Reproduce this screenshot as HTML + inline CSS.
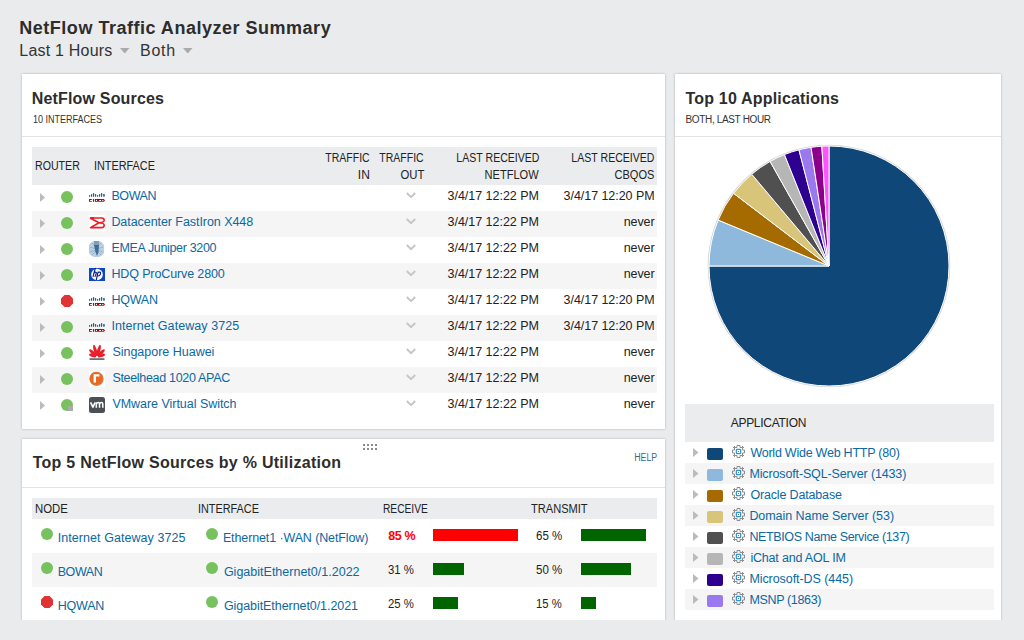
<!DOCTYPE html>
<html><head><meta charset="utf-8"><title>NetFlow Traffic Analyzer Summary</title>
<style>
html,body{margin:0;padding:0;}
body{width:1024px;height:640px;overflow:hidden;position:relative;background:#eaebed;font-family:"Liberation Sans",sans-serif;}
.t{position:absolute;white-space:pre;font-family:"Liberation Sans",sans-serif;}
.r{position:absolute;display:block;}
.panel{position:absolute;background:#fff;box-shadow:0 0 1px rgba(0,0,0,.25),0 0 3px rgba(0,0,0,.12);}
</style></head><body>
<div class="t" style="top:19.26px;font-size:18px;line-height:18px;font-weight:bold;color:#2d2d2d;letter-spacing:0.514px;left:19.30px;">NetFlow Traffic Analyzer Summary</div>
<div class="t" style="top:42.56px;font-size:16px;line-height:16px;font-weight:normal;color:#333;letter-spacing:0.208px;left:19.30px;">Last 1 Hours</div>
<div class="t" style="top:42.56px;font-size:16px;line-height:16px;font-weight:normal;color:#333;letter-spacing:0.728px;left:140.00px;">Both</div>
<svg class="r" style="left:120px;top:47.5px" width="9.5" height="5.5"><polygon points="0,0 9.5,0 4.75,5.5" fill="#aaaaaa"/></svg>
<svg class="r" style="left:183px;top:47.5px" width="9.5" height="5.5"><polygon points="0,0 9.5,0 4.75,5.5" fill="#aaaaaa"/></svg>
<div class="panel" style="left:22px;top:74px;width:643px;height:355px;"></div>
<div class="panel" style="left:22px;top:439px;width:643px;height:181px;clip-path:inset(-6px -6px 0 -6px);"></div>
<div class="panel" style="left:675px;top:74px;width:326px;height:546px;clip-path:inset(-6px -6px 0 -6px);"></div>
<div class="t" style="top:90.66px;font-size:16px;line-height:16px;font-weight:bold;color:#2d2d2d;letter-spacing:0.178px;left:31.70px;">NetFlow Sources</div>
<div class="t" style="top:114.83px;font-size:10px;line-height:10px;font-weight:normal;color:#333;letter-spacing:0.000px;transform:scaleX(0.9011);transform-origin:left center;left:32.70px;">10 INTERFACES</div>
<div class="r" style="left:22px;top:136px;width:643px;height:1px;background:#e3e3e3;"></div>
<div class="r" style="left:32px;top:147px;width:625px;height:38px;background:#ebecee;"></div>
<div class="t" style="top:160.14px;font-size:12px;line-height:12px;font-weight:normal;color:#222;letter-spacing:0.000px;transform:scaleX(0.8843);transform-origin:left center;left:35.00px;">ROUTER</div>
<div class="t" style="top:160.14px;font-size:12px;line-height:12px;font-weight:normal;color:#222;letter-spacing:0.000px;transform:scaleX(0.9044);transform-origin:left center;left:93.90px;">INTERFACE</div>
<div class="t" style="top:152.34px;font-size:12px;line-height:12px;font-weight:normal;color:#222;letter-spacing:0.000px;transform:scaleX(0.8747);transform-origin:right center;right:654.20px;text-align:right;">TRAFFIC</div>
<div class="t" style="top:169.14px;font-size:12px;line-height:12px;font-weight:normal;color:#222;letter-spacing:0.200px;right:653.80px;text-align:right;">IN</div>
<div class="t" style="top:152.34px;font-size:12px;line-height:12px;font-weight:normal;color:#222;letter-spacing:0.000px;transform:scaleX(0.8747);transform-origin:right center;right:600.00px;text-align:right;">TRAFFIC</div>
<div class="t" style="top:169.14px;font-size:12px;line-height:12px;font-weight:normal;color:#222;letter-spacing:0.000px;transform:scaleX(0.9423);transform-origin:right center;right:600.00px;text-align:right;">OUT</div>
<div class="t" style="top:152.34px;font-size:12px;line-height:12px;font-weight:normal;color:#222;letter-spacing:0.000px;transform:scaleX(0.8797);transform-origin:right center;right:485.00px;text-align:right;">LAST RECEIVED</div>
<div class="t" style="top:169.14px;font-size:12px;line-height:12px;font-weight:normal;color:#222;letter-spacing:0.000px;transform:scaleX(0.9218);transform-origin:right center;right:485.00px;text-align:right;">NETFLOW</div>
<div class="t" style="top:152.34px;font-size:12px;line-height:12px;font-weight:normal;color:#222;letter-spacing:0.000px;transform:scaleX(0.8797);transform-origin:right center;right:369.40px;text-align:right;">LAST RECEIVED</div>
<div class="t" style="top:169.14px;font-size:12px;line-height:12px;font-weight:normal;color:#222;letter-spacing:0.000px;transform:scaleX(0.9183);transform-origin:right center;right:369.40px;text-align:right;">CBQOS</div>
<svg class="r" style="left:40px;top:193px" width="5" height="9"><polygon points="0,0 5,4.5 0,9" fill="#bbbbbb"/></svg>
<svg class="r" style="left:61px;top:191px" width="12" height="12"><circle cx="6" cy="6" r="6" fill="#77c25e"/></svg>
<svg class="r" style="left:89px;top:189px" width="16" height="16"><rect x="0" y="5.9" width="1.2" height="1.9" rx=".5" fill="#1d5b8a"/><rect x="2" y="5" width="1.2" height="2.8" rx=".5" fill="#1d5b8a"/><rect x="4" y="4" width="1.2" height="3.8" rx=".5" fill="#1d5b8a"/><rect x="6" y="5" width="1.2" height="2.8" rx=".5" fill="#1d5b8a"/><rect x="8" y="5.9" width="1.2" height="1.9" rx=".5" fill="#1d5b8a"/><rect x="10" y="5" width="1.2" height="2.8" rx=".5" fill="#1d5b8a"/><rect x="12" y="4" width="1.2" height="3.8" rx=".5" fill="#1d5b8a"/><rect x="14.2" y="5" width="1.5" height="2.8" rx=".5" fill="#1d5b8a"/><path d="M0,10 H2.8 V10.9 H1.1 V11.9 H2.8 V12.8 H0 Z" fill="#9a0b0b"/><rect x="3.9" y="10" width="1.2" height="2.8" fill="#9a0b0b"/><path d="M5.9,10 H12 V10.9 H10.2 V11.9 H12 V12.8 H5.9 Z" fill="#9a0b0b"/><circle cx="7.5" cy="11.4" r=".6" fill="#fff"/><path d="M12,10 H14.8 L16,11.4 L14.8,12.8 H12 Z" fill="#9a0b0b"/><circle cx="13.8" cy="11.4" r=".65" fill="#fff"/></svg>
<div class="t" style="top:189.82px;font-size:12.5px;line-height:12.5px;font-weight:normal;color:#0a68a3;letter-spacing:-0.408px;left:111.40px;">BOWAN</div>
<svg class="r" style="left:406px;top:192px" width="10" height="6"><polyline points="0.8,1 5,5.1 9.2,1" fill="none" stroke="#c6c6c6" stroke-width="2"/></svg>
<div class="t" style="top:190.12px;font-size:12.5px;line-height:12.5px;font-weight:normal;color:#222;letter-spacing:-0.016px;right:485.02px;text-align:right;">3/4/17 12:22 PM</div>
<div class="t" style="top:190.12px;font-size:12.5px;line-height:12.5px;font-weight:normal;color:#222;letter-spacing:-0.051px;right:369.45px;text-align:right;">3/4/17 12:20 PM</div>
<div class="r" style="left:32px;top:211px;width:625px;height:26px;background:#f5f5f5;"></div>
<svg class="r" style="left:40px;top:219px" width="5" height="9"><polygon points="0,0 5,4.5 0,9" fill="#bbbbbb"/></svg>
<svg class="r" style="left:61px;top:217px" width="12" height="12"><circle cx="6" cy="6" r="6" fill="#77c25e"/></svg>
<svg class="r" style="left:89px;top:215px" width="16" height="16"><rect width="16" height="16" fill="#fff"/><path d="M0.3,2 L5.5,2 L4.5,4.2 Z" fill="#ee1c24"/><path d="M1,3 H12.6 Q15.2,3 15.2,5.3 Q15.2,7.6 10,7.7 M1,3 L10,7.7 L1.5,12.6 H12.6 Q15.2,12.6 15.2,10.3 Q15.2,7.8 10,7.7" fill="none" stroke="#ee1c24" stroke-width="1.6" stroke-linejoin="round"/></svg>
<div class="t" style="top:215.82px;font-size:12.5px;line-height:12.5px;font-weight:normal;color:#0a68a3;letter-spacing:-0.060px;left:111.40px;">Datacenter FastIron X448</div>
<svg class="r" style="left:406px;top:218px" width="10" height="6"><polyline points="0.8,1 5,5.1 9.2,1" fill="none" stroke="#c6c6c6" stroke-width="2"/></svg>
<div class="t" style="top:216.12px;font-size:12.5px;line-height:12.5px;font-weight:normal;color:#222;letter-spacing:-0.016px;right:485.02px;text-align:right;">3/4/17 12:22 PM</div>
<div class="t" style="top:216.12px;font-size:12.5px;line-height:12.5px;font-weight:normal;color:#222;letter-spacing:-0.076px;right:369.48px;text-align:right;">never</div>
<svg class="r" style="left:40px;top:245px" width="5" height="9"><polygon points="0,0 5,4.5 0,9" fill="#bbbbbb"/></svg>
<svg class="r" style="left:61px;top:243px" width="12" height="12"><circle cx="6" cy="6" r="6" fill="#77c25e"/></svg>
<svg class="r" style="left:89px;top:241px" width="16" height="16"><polygon points="5,0 10,0 13,1.5 15,4 15,12 13,14.5 10,16 5,16 2,14.5 0,12 0,4 2,1.5" fill="#bccfe0"/><path d="M1,6 L7,8 M14,6 L8,8 M1,11 L7,9 M14,11 L8,9 M3,2 L7,6 M12,2 L8,6 M3,14 L7,10 M12,14 L8,10" stroke="#8fadc6" stroke-width=".8"/><rect x="5" y="0" width="5" height="5" fill="#7d9dbb"/><path d="M5,4 H10 L9.5,11 L8,15 L6.5,11 Z" fill="#3f6c96"/></svg>
<div class="t" style="top:241.82px;font-size:12.5px;line-height:12.5px;font-weight:normal;color:#0a68a3;letter-spacing:-0.339px;left:111.40px;">EMEA Juniper 3200</div>
<svg class="r" style="left:406px;top:244px" width="10" height="6"><polyline points="0.8,1 5,5.1 9.2,1" fill="none" stroke="#c6c6c6" stroke-width="2"/></svg>
<div class="t" style="top:242.12px;font-size:12.5px;line-height:12.5px;font-weight:normal;color:#222;letter-spacing:-0.016px;right:485.02px;text-align:right;">3/4/17 12:22 PM</div>
<div class="t" style="top:242.12px;font-size:12.5px;line-height:12.5px;font-weight:normal;color:#222;letter-spacing:-0.076px;right:369.48px;text-align:right;">never</div>
<div class="r" style="left:32px;top:263px;width:625px;height:26px;background:#f5f5f5;"></div>
<svg class="r" style="left:40px;top:271px" width="5" height="9"><polygon points="0,0 5,4.5 0,9" fill="#bbbbbb"/></svg>
<svg class="r" style="left:61px;top:269px" width="12" height="12"><circle cx="6" cy="6" r="6" fill="#77c25e"/></svg>
<svg class="r" style="left:89px;top:267px" width="16" height="16"><rect x="0" y="1" width="16" height="13" fill="#0e46c6"/><circle cx="8" cy="7.5" r="5.8" fill="#fff"/><path d="M6.3,1.4 L4.1,9.4 M4.7,6.6 Q5.6,5 7,5.2 Q7.6,5.5 7.3,6.3 L6.1,9.4 M9,5 L7.3,12.8 M9,5.6 Q10.4,4.9 11.4,5.3 Q11.9,6 11.2,7.6 Q10.6,9 9.4,9 L8.1,9" stroke="#0a1c8c" stroke-width="1.15" fill="none" stroke-linecap="round"/></svg>
<div class="t" style="top:267.82px;font-size:12.5px;line-height:12.5px;font-weight:normal;color:#0a68a3;letter-spacing:-0.123px;left:111.40px;">HDQ ProCurve 2800</div>
<svg class="r" style="left:406px;top:270px" width="10" height="6"><polyline points="0.8,1 5,5.1 9.2,1" fill="none" stroke="#c6c6c6" stroke-width="2"/></svg>
<div class="t" style="top:268.12px;font-size:12.5px;line-height:12.5px;font-weight:normal;color:#222;letter-spacing:-0.016px;right:485.02px;text-align:right;">3/4/17 12:22 PM</div>
<div class="t" style="top:268.12px;font-size:12.5px;line-height:12.5px;font-weight:normal;color:#222;letter-spacing:-0.076px;right:369.48px;text-align:right;">never</div>
<svg class="r" style="left:40px;top:297px" width="5" height="9"><polygon points="0,0 5,4.5 0,9" fill="#bbbbbb"/></svg>
<svg class="r" style="left:61px;top:295px" width="12" height="12"><polygon points="3.5,0 8.5,0 12,3.5 12,8.5 8.5,12 3.5,12 0,8.5 0,3.5" fill="#e03434"/></svg>
<svg class="r" style="left:89px;top:293px" width="16" height="16"><rect x="0" y="5.9" width="1.2" height="1.9" rx=".5" fill="#1d5b8a"/><rect x="2" y="5" width="1.2" height="2.8" rx=".5" fill="#1d5b8a"/><rect x="4" y="4" width="1.2" height="3.8" rx=".5" fill="#1d5b8a"/><rect x="6" y="5" width="1.2" height="2.8" rx=".5" fill="#1d5b8a"/><rect x="8" y="5.9" width="1.2" height="1.9" rx=".5" fill="#1d5b8a"/><rect x="10" y="5" width="1.2" height="2.8" rx=".5" fill="#1d5b8a"/><rect x="12" y="4" width="1.2" height="3.8" rx=".5" fill="#1d5b8a"/><rect x="14.2" y="5" width="1.5" height="2.8" rx=".5" fill="#1d5b8a"/><path d="M0,10 H2.8 V10.9 H1.1 V11.9 H2.8 V12.8 H0 Z" fill="#9a0b0b"/><rect x="3.9" y="10" width="1.2" height="2.8" fill="#9a0b0b"/><path d="M5.9,10 H12 V10.9 H10.2 V11.9 H12 V12.8 H5.9 Z" fill="#9a0b0b"/><circle cx="7.5" cy="11.4" r=".6" fill="#fff"/><path d="M12,10 H14.8 L16,11.4 L14.8,12.8 H12 Z" fill="#9a0b0b"/><circle cx="13.8" cy="11.4" r=".65" fill="#fff"/></svg>
<div class="t" style="top:293.82px;font-size:12.5px;line-height:12.5px;font-weight:normal;color:#0a68a3;letter-spacing:-0.205px;left:111.40px;">HQWAN</div>
<svg class="r" style="left:406px;top:296px" width="10" height="6"><polyline points="0.8,1 5,5.1 9.2,1" fill="none" stroke="#c6c6c6" stroke-width="2"/></svg>
<div class="t" style="top:294.12px;font-size:12.5px;line-height:12.5px;font-weight:normal;color:#222;letter-spacing:-0.016px;right:485.02px;text-align:right;">3/4/17 12:22 PM</div>
<div class="t" style="top:294.12px;font-size:12.5px;line-height:12.5px;font-weight:normal;color:#222;letter-spacing:-0.051px;right:369.45px;text-align:right;">3/4/17 12:20 PM</div>
<div class="r" style="left:32px;top:315px;width:625px;height:26px;background:#f5f5f5;"></div>
<svg class="r" style="left:40px;top:323px" width="5" height="9"><polygon points="0,0 5,4.5 0,9" fill="#bbbbbb"/></svg>
<svg class="r" style="left:61px;top:321px" width="12" height="12"><circle cx="6" cy="6" r="6" fill="#77c25e"/></svg>
<svg class="r" style="left:89px;top:319px" width="16" height="16"><rect x="0" y="5.9" width="1.2" height="1.9" rx=".5" fill="#1d5b8a"/><rect x="2" y="5" width="1.2" height="2.8" rx=".5" fill="#1d5b8a"/><rect x="4" y="4" width="1.2" height="3.8" rx=".5" fill="#1d5b8a"/><rect x="6" y="5" width="1.2" height="2.8" rx=".5" fill="#1d5b8a"/><rect x="8" y="5.9" width="1.2" height="1.9" rx=".5" fill="#1d5b8a"/><rect x="10" y="5" width="1.2" height="2.8" rx=".5" fill="#1d5b8a"/><rect x="12" y="4" width="1.2" height="3.8" rx=".5" fill="#1d5b8a"/><rect x="14.2" y="5" width="1.5" height="2.8" rx=".5" fill="#1d5b8a"/><path d="M0,10 H2.8 V10.9 H1.1 V11.9 H2.8 V12.8 H0 Z" fill="#9a0b0b"/><rect x="3.9" y="10" width="1.2" height="2.8" fill="#9a0b0b"/><path d="M5.9,10 H12 V10.9 H10.2 V11.9 H12 V12.8 H5.9 Z" fill="#9a0b0b"/><circle cx="7.5" cy="11.4" r=".6" fill="#fff"/><path d="M12,10 H14.8 L16,11.4 L14.8,12.8 H12 Z" fill="#9a0b0b"/><circle cx="13.8" cy="11.4" r=".65" fill="#fff"/></svg>
<div class="t" style="top:319.82px;font-size:12.5px;line-height:12.5px;font-weight:normal;color:#0a68a3;letter-spacing:0.064px;left:111.40px;">Internet Gateway 3725</div>
<svg class="r" style="left:406px;top:322px" width="10" height="6"><polyline points="0.8,1 5,5.1 9.2,1" fill="none" stroke="#c6c6c6" stroke-width="2"/></svg>
<div class="t" style="top:320.12px;font-size:12.5px;line-height:12.5px;font-weight:normal;color:#222;letter-spacing:-0.016px;right:485.02px;text-align:right;">3/4/17 12:22 PM</div>
<div class="t" style="top:320.12px;font-size:12.5px;line-height:12.5px;font-weight:normal;color:#222;letter-spacing:-0.051px;right:369.45px;text-align:right;">3/4/17 12:20 PM</div>
<svg class="r" style="left:40px;top:349px" width="5" height="9"><polygon points="0,0 5,4.5 0,9" fill="#bbbbbb"/></svg>
<svg class="r" style="left:61px;top:347px" width="12" height="12"><circle cx="6" cy="6" r="6" fill="#77c25e"/></svg>
<svg class="r" style="left:89px;top:345px" width="16" height="17"><ellipse cx="3.53" cy="10.55" rx="1.6" ry="3.70" transform="rotate(-72 3.53 10.55)" fill="#e8202a"/><ellipse cx="3.90" cy="7.90" rx="1.7" ry="4.80" transform="rotate(-45 3.90 7.90)" fill="#e8202a"/><ellipse cx="6.24" cy="5.43" rx="1.6" ry="5.80" transform="rotate(-15 6.24 5.43)" fill="#e8202a"/><ellipse cx="9.76" cy="5.43" rx="1.6" ry="5.80" transform="rotate(15 9.76 5.43)" fill="#e8202a"/><ellipse cx="12.10" cy="7.90" rx="1.7" ry="4.80" transform="rotate(45 12.10 7.90)" fill="#e8202a"/><ellipse cx="12.47" cy="10.55" rx="1.6" ry="3.70" transform="rotate(72 12.47 10.55)" fill="#e8202a"/><rect x="0.5" y="13.2" width="15" height="1.8" fill="#2c3044" opacity=".7"/></svg>
<div class="t" style="top:345.82px;font-size:12.5px;line-height:12.5px;font-weight:normal;color:#0a68a3;letter-spacing:-0.011px;left:112.40px;">Singapore Huawei</div>
<svg class="r" style="left:406px;top:348px" width="10" height="6"><polyline points="0.8,1 5,5.1 9.2,1" fill="none" stroke="#c6c6c6" stroke-width="2"/></svg>
<div class="t" style="top:346.12px;font-size:12.5px;line-height:12.5px;font-weight:normal;color:#222;letter-spacing:-0.016px;right:485.02px;text-align:right;">3/4/17 12:22 PM</div>
<div class="t" style="top:346.12px;font-size:12.5px;line-height:12.5px;font-weight:normal;color:#222;letter-spacing:-0.076px;right:369.48px;text-align:right;">never</div>
<div class="r" style="left:32px;top:367px;width:625px;height:26px;background:#f5f5f5;"></div>
<svg class="r" style="left:40px;top:375px" width="5" height="9"><polygon points="0,0 5,4.5 0,9" fill="#bbbbbb"/></svg>
<svg class="r" style="left:61px;top:373px" width="12" height="12"><circle cx="6" cy="6" r="6" fill="#77c25e"/></svg>
<svg class="r" style="left:89px;top:371px" width="16" height="16"><rect width="16" height="16" fill="#fff"/><circle cx="7.7" cy="8" r="7" fill="#a94f15" opacity=".6"/><circle cx="7.2" cy="7.5" r="6.8" fill="#e8691f"/><path d="M4.6,11.6 V3.2 H10.4 V5.6 H7 V11.6 Z" fill="#fff"/></svg>
<div class="t" style="top:371.82px;font-size:12.5px;line-height:12.5px;font-weight:normal;color:#0a68a3;letter-spacing:-0.313px;left:112.40px;">Steelhead 1020 APAC</div>
<svg class="r" style="left:406px;top:374px" width="10" height="6"><polyline points="0.8,1 5,5.1 9.2,1" fill="none" stroke="#c6c6c6" stroke-width="2"/></svg>
<div class="t" style="top:372.12px;font-size:12.5px;line-height:12.5px;font-weight:normal;color:#222;letter-spacing:-0.016px;right:485.02px;text-align:right;">3/4/17 12:22 PM</div>
<div class="t" style="top:372.12px;font-size:12.5px;line-height:12.5px;font-weight:normal;color:#222;letter-spacing:-0.076px;right:369.48px;text-align:right;">never</div>
<svg class="r" style="left:40px;top:401px" width="5" height="9"><polygon points="0,0 5,4.5 0,9" fill="#bbbbbb"/></svg>
<svg class="r" style="left:61px;top:399px" width="12" height="12"><circle cx="6" cy="6" r="6" fill="#77c25e"/><rect x="7" y="7" width="5" height="5" fill="#aaaaaa"/></svg>
<svg class="r" style="left:89px;top:397px" width="16" height="16"><rect x="0" y="0" width="16" height="16" rx="2.5" fill="#4b4f56"/><path d="M1.6,5.4 L3.9,10.2 L6.2,5.4" fill="none" stroke="#fff" stroke-width="1.6" stroke-linejoin="round"/><path d="M7.3,10.8 V5.4 M7.3,7 Q7.6,5.4 9.2,5.4 Q10.5,5.4 10.5,7 V10.8 M10.5,7 Q10.8,5.4 12.4,5.4 Q13.8,5.4 13.8,7 V10.8" fill="none" stroke="#fff" stroke-width="1.5"/></svg>
<div class="t" style="top:397.82px;font-size:12.5px;line-height:12.5px;font-weight:normal;color:#0a68a3;letter-spacing:-0.033px;left:112.40px;">VMware Virtual Switch</div>
<svg class="r" style="left:406px;top:400px" width="10" height="6"><polyline points="0.8,1 5,5.1 9.2,1" fill="none" stroke="#c6c6c6" stroke-width="2"/></svg>
<div class="t" style="top:398.12px;font-size:12.5px;line-height:12.5px;font-weight:normal;color:#222;letter-spacing:-0.016px;right:485.02px;text-align:right;">3/4/17 12:22 PM</div>
<div class="t" style="top:398.12px;font-size:12.5px;line-height:12.5px;font-weight:normal;color:#222;letter-spacing:-0.076px;right:369.48px;text-align:right;">never</div>
<div class="r" style="left:363px;top:444px;width:2px;height:2px;background:#8a8a8a;"></div>
<div class="r" style="left:363px;top:448px;width:2px;height:2px;background:#8a8a8a;"></div>
<div class="r" style="left:367px;top:444px;width:2px;height:2px;background:#8a8a8a;"></div>
<div class="r" style="left:367px;top:448px;width:2px;height:2px;background:#8a8a8a;"></div>
<div class="r" style="left:371px;top:444px;width:2px;height:2px;background:#8a8a8a;"></div>
<div class="r" style="left:371px;top:448px;width:2px;height:2px;background:#8a8a8a;"></div>
<div class="r" style="left:375px;top:444px;width:2px;height:2px;background:#8a8a8a;"></div>
<div class="r" style="left:375px;top:448px;width:2px;height:2px;background:#8a8a8a;"></div>
<div class="t" style="top:455.16px;font-size:16px;line-height:16px;font-weight:bold;color:#2d2d2d;letter-spacing:0.270px;left:32.70px;">Top 5 NetFlow Sources by % Utilization</div>
<div class="t" style="top:452.94px;font-size:10px;line-height:10px;font-weight:normal;color:#3d6690;letter-spacing:0.000px;transform:scaleX(0.8771);transform-origin:right center;right:367.10px;text-align:right;">HELP</div>
<div class="r" style="left:22px;top:487px;width:643px;height:1px;background:#e3e3e3;"></div>
<div class="r" style="left:32px;top:498px;width:625px;height:21px;background:#ebecee;"></div>
<div class="t" style="top:503.44px;font-size:12px;line-height:12px;font-weight:normal;color:#222;letter-spacing:0.000px;transform:scaleX(0.9461);transform-origin:left center;left:34.70px;">NODE</div>
<div class="t" style="top:503.44px;font-size:12px;line-height:12px;font-weight:normal;color:#222;letter-spacing:0.000px;transform:scaleX(0.9044);transform-origin:left center;left:198.40px;">INTERFACE</div>
<div class="t" style="top:503.44px;font-size:12px;line-height:12px;font-weight:normal;color:#222;letter-spacing:0.000px;transform:scaleX(0.8504);transform-origin:left center;left:383.20px;">RECEIVE</div>
<div class="t" style="top:503.44px;font-size:12px;line-height:12px;font-weight:normal;color:#222;letter-spacing:0.000px;transform:scaleX(0.9226);transform-origin:left center;left:531.10px;">TRANSMIT</div>
<svg class="r" style="left:41px;top:528px" width="12" height="12"><circle cx="6" cy="6" r="6" fill="#77c25e"/></svg>
<div class="t" style="top:531.82px;font-size:12.5px;line-height:12.5px;font-weight:normal;color:#0a68a3;letter-spacing:0.064px;left:57.70px;">Internet Gateway 3725</div>
<svg class="r" style="left:206px;top:528px" width="12" height="12"><circle cx="6" cy="6" r="6" fill="#77c25e"/></svg>
<div class="t" style="top:531.82px;font-size:12.5px;line-height:12.5px;font-weight:normal;color:#0a68a3;letter-spacing:-0.118px;left:222.90px;">Ethernet1 ·WAN (NetFlow)</div>
<div class="t" style="top:530.42px;font-size:12.5px;line-height:12.5px;font-weight:bold;color:#ff0000;letter-spacing:-0.392px;left:388.20px;">85 %</div>
<div class="r" style="left:433px;top:529px;width:85px;height:12px;background:#ff0000;"></div>
<div class="t" style="top:530.42px;font-size:12.5px;line-height:12.5px;font-weight:normal;color:#222;letter-spacing:0.000px;transform:scaleX(0.9197);transform-origin:left center;left:536.40px;">65 %</div>
<div class="r" style="left:581px;top:529px;width:65px;height:12px;background:#006400;"></div>
<div class="r" style="left:32px;top:553px;width:625px;height:34px;background:#f5f5f5;"></div>
<svg class="r" style="left:41px;top:562px" width="12" height="12"><circle cx="6" cy="6" r="6" fill="#77c25e"/></svg>
<div class="t" style="top:565.82px;font-size:12.5px;line-height:12.5px;font-weight:normal;color:#0a68a3;letter-spacing:-0.408px;left:57.70px;">BOWAN</div>
<svg class="r" style="left:206px;top:562px" width="12" height="12"><circle cx="6" cy="6" r="6" fill="#77c25e"/></svg>
<div class="t" style="top:565.82px;font-size:12.5px;line-height:12.5px;font-weight:normal;color:#0a68a3;letter-spacing:0.006px;left:223.90px;">GigabitEthernet0/1.2022</div>
<div class="t" style="top:564.42px;font-size:12.5px;line-height:12.5px;font-weight:normal;color:#222;letter-spacing:0.000px;transform:scaleX(0.9091);transform-origin:left center;left:388.20px;">31 %</div>
<div class="r" style="left:433px;top:563px;width:31px;height:12px;background:#006400;"></div>
<div class="t" style="top:564.42px;font-size:12.5px;line-height:12.5px;font-weight:normal;color:#222;letter-spacing:0.000px;transform:scaleX(0.9197);transform-origin:left center;left:536.40px;">50 %</div>
<div class="r" style="left:581px;top:563px;width:50px;height:12px;background:#006400;"></div>
<svg class="r" style="left:41px;top:596px" width="12" height="12"><polygon points="3.5,0 8.5,0 12,3.5 12,8.5 8.5,12 3.5,12 0,8.5 0,3.5" fill="#e03434"/></svg>
<div class="t" style="top:599.82px;font-size:12.5px;line-height:12.5px;font-weight:normal;color:#0a68a3;letter-spacing:-0.205px;left:57.70px;">HQWAN</div>
<svg class="r" style="left:206px;top:596px" width="12" height="12"><circle cx="6" cy="6" r="6" fill="#77c25e"/></svg>
<div class="t" style="top:599.82px;font-size:12.5px;line-height:12.5px;font-weight:normal;color:#0a68a3;letter-spacing:-0.062px;left:223.90px;">GigabitEthernet0/1.2021</div>
<div class="t" style="top:598.42px;font-size:12.5px;line-height:12.5px;font-weight:normal;color:#222;letter-spacing:0.000px;transform:scaleX(0.9091);transform-origin:left center;left:388.20px;">25 %</div>
<div class="r" style="left:433px;top:597px;width:25px;height:12px;background:#006400;"></div>
<div class="t" style="top:598.42px;font-size:12.5px;line-height:12.5px;font-weight:normal;color:#222;letter-spacing:0.000px;transform:scaleX(0.9020);transform-origin:left center;left:536.40px;">15 %</div>
<div class="r" style="left:581px;top:597px;width:15px;height:12px;background:#006400;"></div>
<div class="t" style="top:90.66px;font-size:16px;line-height:16px;font-weight:bold;color:#2d2d2d;letter-spacing:0.182px;left:685.50px;">Top 10 Applications</div>
<div class="t" style="top:114.83px;font-size:10px;line-height:10px;font-weight:normal;color:#333;letter-spacing:-0.346px;left:685.50px;">BOTH, LAST HOUR</div>
<div class="r" style="left:675px;top:136px;width:326px;height:1px;background:#e3e3e3;"></div>
<svg class="r" style="left:707.30px;top:143.80px" width="244" height="244"><circle cx="122" cy="122" r="120.5" fill="none" stroke="#d6d6d6" stroke-width="1.5"/><path d="M122,122 L122.00,2.00 A120,120 0 1 1 2.00,122.00 Z" fill="#0f4778" stroke="#fff" stroke-width="1" stroke-linejoin="round"/><path d="M122,122 L2.00,122.00 A120,120 0 0 1 11.13,76.08 Z" fill="#8fb9dc" stroke="#fff" stroke-width="1" stroke-linejoin="round"/><path d="M122,122 L11.13,76.08 A120,120 0 0 1 26.54,49.28 Z" fill="#a56a00" stroke="#fff" stroke-width="1" stroke-linejoin="round"/><path d="M122,122 L26.54,49.28 A120,120 0 0 1 44.71,30.21 Z" fill="#d8c57a" stroke="#fff" stroke-width="1" stroke-linejoin="round"/><path d="M122,122 L44.71,30.21 A120,120 0 0 1 63.09,17.45 Z" fill="#505050" stroke="#fff" stroke-width="1" stroke-linejoin="round"/><path d="M122,122 L63.09,17.45 A120,120 0 0 1 77.44,10.58 Z" fill="#b6b6b6" stroke="#fff" stroke-width="1" stroke-linejoin="round"/><path d="M122,122 L77.44,10.58 A120,120 0 0 1 91.95,5.82 Z" fill="#2d0090" stroke="#fff" stroke-width="1" stroke-linejoin="round"/><path d="M122,122 L91.95,5.82 A120,120 0 0 1 104.06,3.35 Z" fill="#9a78ee" stroke="#fff" stroke-width="1" stroke-linejoin="round"/><path d="M122,122 L104.06,3.35 A120,120 0 0 1 114.88,2.21 Z" fill="#8c008c" stroke="#fff" stroke-width="1" stroke-linejoin="round"/><path d="M122,122 L114.88,2.21 A120,120 0 0 1 122.00,2.00 Z" fill="#ff55ff" stroke="#fff" stroke-width="1" stroke-linejoin="round"/></svg>
<div class="r" style="left:685px;top:404px;width:309px;height:38px;background:#ebecee;"></div>
<div class="t" style="top:417.24px;font-size:12px;line-height:12px;font-weight:normal;color:#222;letter-spacing:-0.280px;left:730.70px;">APPLICATION</div>
<svg class="r" style="left:693px;top:448px" width="5.5" height="9"><polygon points="0,0 5.5,4.5 0,9" fill="#bbbbbb"/></svg>
<div class="r" style="left:707px;top:448px;width:16px;height:12px;border-radius:2px;background:#0f4778"></div>
<svg class="r" style="left:732px;top:445px" width="14" height="14"><path d="M5,0.5 H8 V2.5 H10.5 V5 H12.5 V8 H10.5 V10.5 H8 V12.5 H5 V10.5 H2.5 V8 H0.5 V5 H2.5 V2.5 H5 Z M10.5,2.5 H12 M10.5,2.5 V1 M10.5,10.5 H12 M10.5,10.5 V12 M2.5,10.5 H1 M2.5,10.5 V12 M2.5,2.5 H1 M2.5,2.5 V1" fill="none" stroke="#8c8c8c" stroke-width="1"/><rect x="4.4" y="4.4" width="4.2" height="4.2" rx="0.6" fill="none" stroke="#3796d2" stroke-width="1.3"/><rect x="6" y="6" width="1" height="1" fill="#777"/></svg>
<div class="t" style="top:446.92px;font-size:12.5px;line-height:12.5px;font-weight:normal;color:#0a68a3;letter-spacing:-0.238px;left:750.40px;">World Wide Web HTTP (80)</div>
<div class="r" style="left:685px;top:463px;width:309px;height:21px;background:#f5f5f5;"></div>
<svg class="r" style="left:693px;top:469px" width="5.5" height="9"><polygon points="0,0 5.5,4.5 0,9" fill="#bbbbbb"/></svg>
<div class="r" style="left:707px;top:469px;width:16px;height:12px;border-radius:2px;background:#8fb9dc"></div>
<svg class="r" style="left:732px;top:466px" width="14" height="14"><path d="M5,0.5 H8 V2.5 H10.5 V5 H12.5 V8 H10.5 V10.5 H8 V12.5 H5 V10.5 H2.5 V8 H0.5 V5 H2.5 V2.5 H5 Z M10.5,2.5 H12 M10.5,2.5 V1 M10.5,10.5 H12 M10.5,10.5 V12 M2.5,10.5 H1 M2.5,10.5 V12 M2.5,2.5 H1 M2.5,2.5 V1" fill="none" stroke="#8c8c8c" stroke-width="1"/><rect x="4.4" y="4.4" width="4.2" height="4.2" rx="0.6" fill="none" stroke="#3796d2" stroke-width="1.3"/><rect x="6" y="6" width="1" height="1" fill="#777"/></svg>
<div class="t" style="top:467.92px;font-size:12.5px;line-height:12.5px;font-weight:normal;color:#0a68a3;letter-spacing:-0.135px;left:749.40px;">Microsoft-SQL-Server (1433)</div>
<svg class="r" style="left:693px;top:490px" width="5.5" height="9"><polygon points="0,0 5.5,4.5 0,9" fill="#bbbbbb"/></svg>
<div class="r" style="left:707px;top:490px;width:16px;height:12px;border-radius:2px;background:#a56a00"></div>
<svg class="r" style="left:732px;top:487px" width="14" height="14"><path d="M5,0.5 H8 V2.5 H10.5 V5 H12.5 V8 H10.5 V10.5 H8 V12.5 H5 V10.5 H2.5 V8 H0.5 V5 H2.5 V2.5 H5 Z M10.5,2.5 H12 M10.5,2.5 V1 M10.5,10.5 H12 M10.5,10.5 V12 M2.5,10.5 H1 M2.5,10.5 V12 M2.5,2.5 H1 M2.5,2.5 V1" fill="none" stroke="#8c8c8c" stroke-width="1"/><rect x="4.4" y="4.4" width="4.2" height="4.2" rx="0.6" fill="none" stroke="#3796d2" stroke-width="1.3"/><rect x="6" y="6" width="1" height="1" fill="#777"/></svg>
<div class="t" style="top:488.92px;font-size:12.5px;line-height:12.5px;font-weight:normal;color:#0a68a3;letter-spacing:-0.160px;left:750.40px;">Oracle Database</div>
<div class="r" style="left:685px;top:505px;width:309px;height:21px;background:#f5f5f5;"></div>
<svg class="r" style="left:693px;top:511px" width="5.5" height="9"><polygon points="0,0 5.5,4.5 0,9" fill="#bbbbbb"/></svg>
<div class="r" style="left:707px;top:511px;width:16px;height:12px;border-radius:2px;background:#d8c57a"></div>
<svg class="r" style="left:732px;top:508px" width="14" height="14"><path d="M5,0.5 H8 V2.5 H10.5 V5 H12.5 V8 H10.5 V10.5 H8 V12.5 H5 V10.5 H2.5 V8 H0.5 V5 H2.5 V2.5 H5 Z M10.5,2.5 H12 M10.5,2.5 V1 M10.5,10.5 H12 M10.5,10.5 V12 M2.5,10.5 H1 M2.5,10.5 V12 M2.5,2.5 H1 M2.5,2.5 V1" fill="none" stroke="#8c8c8c" stroke-width="1"/><rect x="4.4" y="4.4" width="4.2" height="4.2" rx="0.6" fill="none" stroke="#3796d2" stroke-width="1.3"/><rect x="6" y="6" width="1" height="1" fill="#777"/></svg>
<div class="t" style="top:509.92px;font-size:12.5px;line-height:12.5px;font-weight:normal;color:#0a68a3;letter-spacing:-0.055px;left:749.40px;">Domain Name Server (53)</div>
<svg class="r" style="left:693px;top:532px" width="5.5" height="9"><polygon points="0,0 5.5,4.5 0,9" fill="#bbbbbb"/></svg>
<div class="r" style="left:707px;top:532px;width:16px;height:12px;border-radius:2px;background:#505050"></div>
<svg class="r" style="left:732px;top:529px" width="14" height="14"><path d="M5,0.5 H8 V2.5 H10.5 V5 H12.5 V8 H10.5 V10.5 H8 V12.5 H5 V10.5 H2.5 V8 H0.5 V5 H2.5 V2.5 H5 Z M10.5,2.5 H12 M10.5,2.5 V1 M10.5,10.5 H12 M10.5,10.5 V12 M2.5,10.5 H1 M2.5,10.5 V12 M2.5,2.5 H1 M2.5,2.5 V1" fill="none" stroke="#8c8c8c" stroke-width="1"/><rect x="4.4" y="4.4" width="4.2" height="4.2" rx="0.6" fill="none" stroke="#3796d2" stroke-width="1.3"/><rect x="6" y="6" width="1" height="1" fill="#777"/></svg>
<div class="t" style="top:530.92px;font-size:12.5px;line-height:12.5px;font-weight:normal;color:#0a68a3;letter-spacing:-0.369px;left:749.40px;">NETBIOS Name Service (137)</div>
<div class="r" style="left:685px;top:547px;width:309px;height:21px;background:#f5f5f5;"></div>
<svg class="r" style="left:693px;top:553px" width="5.5" height="9"><polygon points="0,0 5.5,4.5 0,9" fill="#bbbbbb"/></svg>
<div class="r" style="left:707px;top:553px;width:16px;height:12px;border-radius:2px;background:#b6b6b6"></div>
<svg class="r" style="left:732px;top:550px" width="14" height="14"><path d="M5,0.5 H8 V2.5 H10.5 V5 H12.5 V8 H10.5 V10.5 H8 V12.5 H5 V10.5 H2.5 V8 H0.5 V5 H2.5 V2.5 H5 Z M10.5,2.5 H12 M10.5,2.5 V1 M10.5,10.5 H12 M10.5,10.5 V12 M2.5,10.5 H1 M2.5,10.5 V12 M2.5,2.5 H1 M2.5,2.5 V1" fill="none" stroke="#8c8c8c" stroke-width="1"/><rect x="4.4" y="4.4" width="4.2" height="4.2" rx="0.6" fill="none" stroke="#3796d2" stroke-width="1.3"/><rect x="6" y="6" width="1" height="1" fill="#777"/></svg>
<div class="t" style="top:551.92px;font-size:12.5px;line-height:12.5px;font-weight:normal;color:#0a68a3;letter-spacing:-0.183px;left:750.40px;">iChat and AOL IM</div>
<svg class="r" style="left:693px;top:574px" width="5.5" height="9"><polygon points="0,0 5.5,4.5 0,9" fill="#bbbbbb"/></svg>
<div class="r" style="left:707px;top:574px;width:16px;height:12px;border-radius:2px;background:#2d0090"></div>
<svg class="r" style="left:732px;top:571px" width="14" height="14"><path d="M5,0.5 H8 V2.5 H10.5 V5 H12.5 V8 H10.5 V10.5 H8 V12.5 H5 V10.5 H2.5 V8 H0.5 V5 H2.5 V2.5 H5 Z M10.5,2.5 H12 M10.5,2.5 V1 M10.5,10.5 H12 M10.5,10.5 V12 M2.5,10.5 H1 M2.5,10.5 V12 M2.5,2.5 H1 M2.5,2.5 V1" fill="none" stroke="#8c8c8c" stroke-width="1"/><rect x="4.4" y="4.4" width="4.2" height="4.2" rx="0.6" fill="none" stroke="#3796d2" stroke-width="1.3"/><rect x="6" y="6" width="1" height="1" fill="#777"/></svg>
<div class="t" style="top:572.92px;font-size:12.5px;line-height:12.5px;font-weight:normal;color:#0a68a3;letter-spacing:-0.072px;left:749.40px;">Microsoft-DS (445)</div>
<div class="r" style="left:685px;top:589px;width:309px;height:21px;background:#f5f5f5;"></div>
<svg class="r" style="left:693px;top:595px" width="5.5" height="9"><polygon points="0,0 5.5,4.5 0,9" fill="#bbbbbb"/></svg>
<div class="r" style="left:707px;top:595px;width:16px;height:12px;border-radius:2px;background:#9a78ee"></div>
<svg class="r" style="left:732px;top:592px" width="14" height="14"><path d="M5,0.5 H8 V2.5 H10.5 V5 H12.5 V8 H10.5 V10.5 H8 V12.5 H5 V10.5 H2.5 V8 H0.5 V5 H2.5 V2.5 H5 Z M10.5,2.5 H12 M10.5,2.5 V1 M10.5,10.5 H12 M10.5,10.5 V12 M2.5,10.5 H1 M2.5,10.5 V12 M2.5,2.5 H1 M2.5,2.5 V1" fill="none" stroke="#8c8c8c" stroke-width="1"/><rect x="4.4" y="4.4" width="4.2" height="4.2" rx="0.6" fill="none" stroke="#3796d2" stroke-width="1.3"/><rect x="6" y="6" width="1" height="1" fill="#777"/></svg>
<div class="t" style="top:593.92px;font-size:12.5px;line-height:12.5px;font-weight:normal;color:#0a68a3;letter-spacing:-0.346px;left:749.40px;">MSNP (1863)</div>
</body></html>
